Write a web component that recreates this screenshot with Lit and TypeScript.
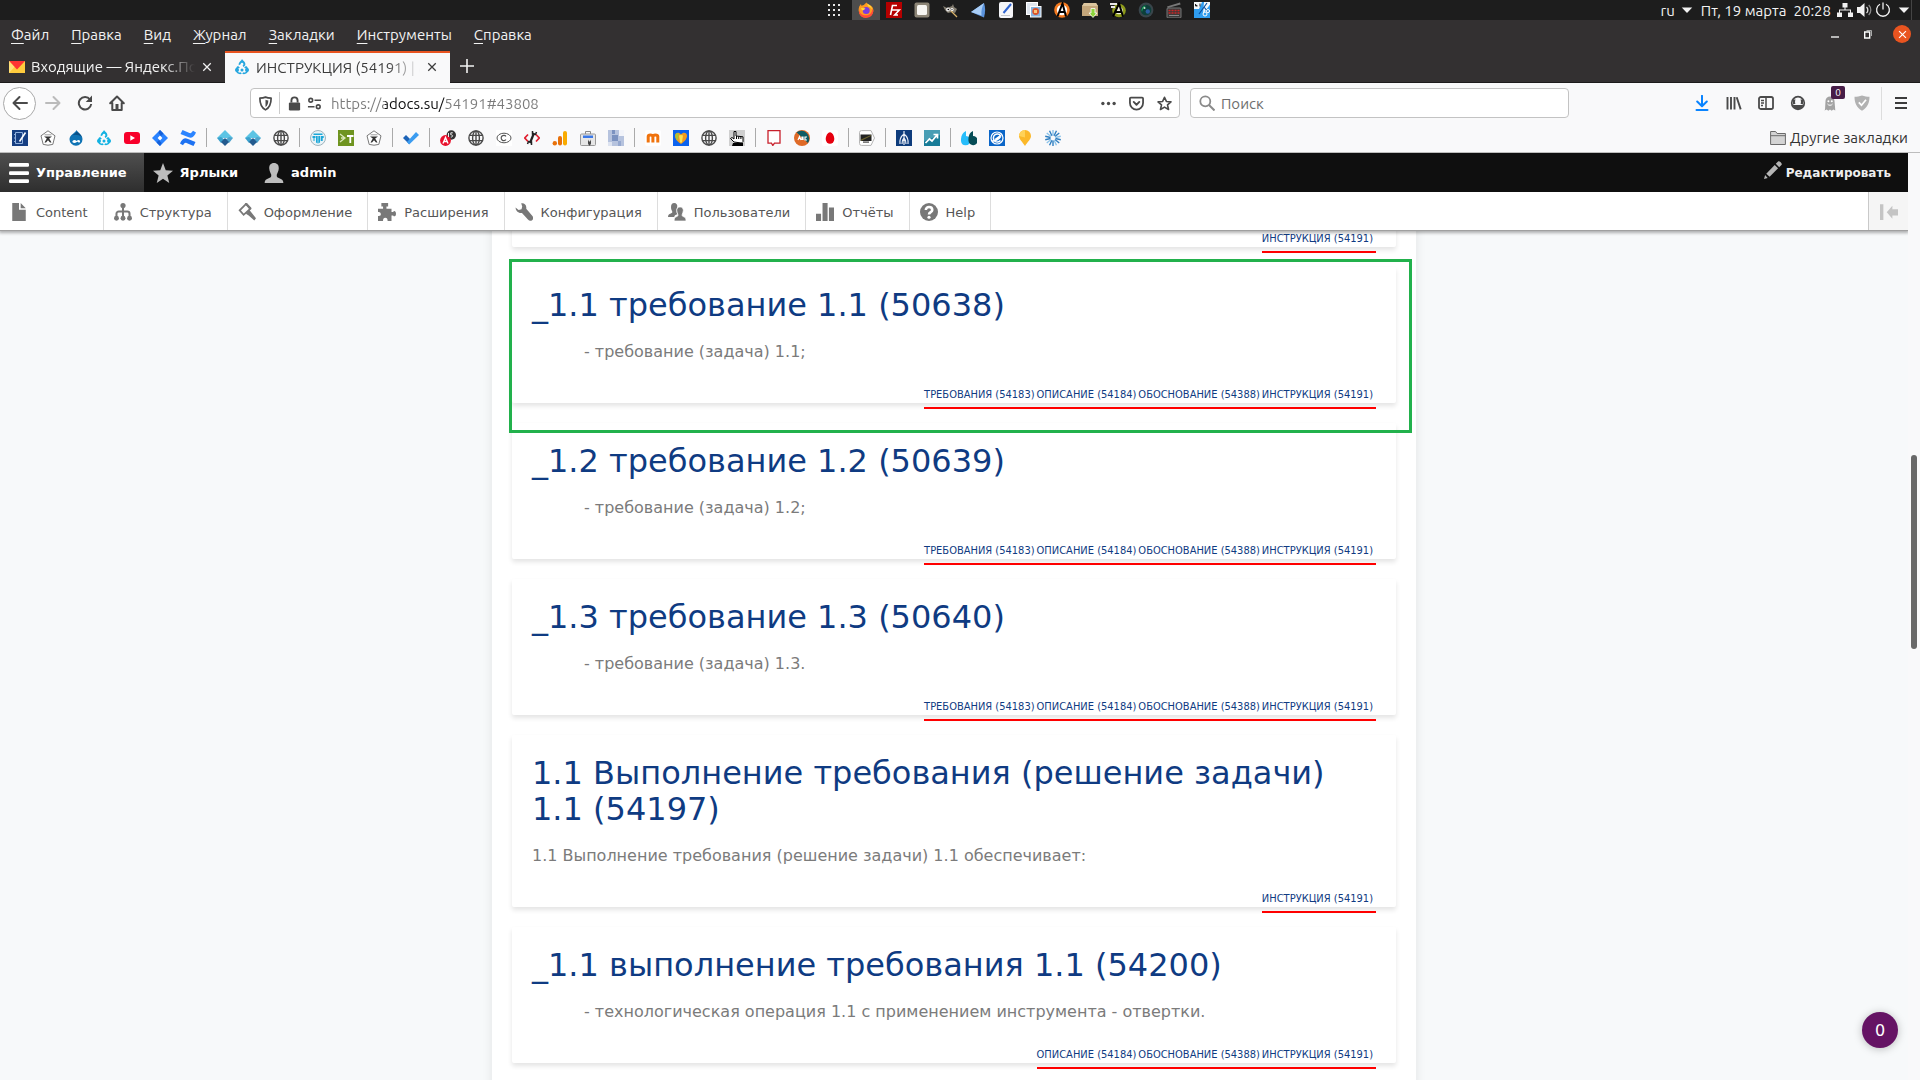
import { LitElement, html, svg, css, nothing } from "lit";
import { customElement, property } from "lit/decorators.js";

const globe = svg`<g fill="none" stroke="#4a4a4a" stroke-width="1.4"><circle cx="8" cy="8" r="7.1"/><ellipse cx="8" cy="8" rx="3.4" ry="7.1"/><path d="M1.6 5.4h12.8M1.6 10.6h12.8M8 1v14"/></g>`;
const diamond = svg`<path fill="#5cc4e4" d="M8 0l8 8H0z"/><path fill="#3aa0cc" d="M0 8l4-1 4 3-4 3z"/><path fill="#4ea3cc" d="M16 8l-4-1-4 3 4 3z"/><path fill="#235a8e" d="M8 8l4 4-4 4-4-4z"/>`;
const badge = svg`<path fill="#fff" stroke="#6a6a6a" stroke-width=".9" d="M8 .8l7 5-2.200 8.600a15 15 0 0 1-9.600 0L1 5.800z"/><path stroke="#888" stroke-width=".8" fill="none" d="M4.500 4.800l7 0"/><path d="M4 6.500h8L9.200 8.500l2.300 4H10L8 10.200 6 12.500H4.500L6.800 8.500z" fill="#333"/>`;
const drupal = (c: string) => svg`<g fill="${c}"><path d="M8 0c.9 1.800 3.400 2.500 3.400 5 0 1.400-.8 2.500-2 3.100L8.600 6.500a1.400 1.400 0 1 0-2-1.300L4.800 6.300C4 3 7.300 2.200 8 0z"/><path d="M4.300 6.800c.2 1 .9 1.800 1.900 2.200a2.300 2.300 0 1 0 .6 4.200l1 1.600A4.300 4.300 0 1 1 4.300 6.800z"/><path d="M11.700 6.800c-.2 1-.9 1.800-1.900 2.200a2.300 2.300 0 1 1-.6 4.200l-1 1.600a4.300 4.300 0 1 0 3.500-8z"/><circle cx="8" cy="11" r="1.500"/><circle cx="3" cy="11" r="2"/><circle cx="13" cy="11" r="2"/></g>`;
const down = svg`<path fill="#f2f2f2" d="M2 5h12l-6 6.500z"/>`;

const icons: Record<string, unknown> = {
  // desktop panel
  apps: svg`<g fill="#e6e6e6">${[2, 7, 12].map((y) => [2, 7, 12].map((x) => svg`<rect x="${x}" y="${y}" width="2" height="2"/>`))}</g>`,
  firefox: svg`<path fill="#ff9a1f" d="M8 15.600a7.400 7.400 0 0 1-7.400-7.400C.6 5.400 1.600 3.400 3 2l.4 1.700L5.800 3 8.500.4 10 2.500c3 .5 5.400 2.800 5.400 6.200A7.400 7.400 0 0 1 8 15.600z"/><path fill="#ff4b3a" d="M1 6.500C1 12 5 13.500 8 13.300c4 0 6.200-2.800 6.300-6.300.8 1 1 1.800 1 2.500A7.400 7.400 0 0 1 1 11z"/><circle cx="8.200" cy="8.400" r="3.500" fill="#7a3be0"/><path fill="#ffd93b" d="M9 1.500c3.500 1.500 5 3.500 5 6-1-2-2.500-2.700-4-3.200zM3 6l4.500.3L6 8l-2 .6z"/>`,
  fz: svg`<rect width="16" height="16" fill="#b50000"/><path fill="none" stroke="#fff" stroke-width="1.600" d="M4.500 13l2-9.500H11M5.500 8h4M9.300 8h4l-4.600 5H12"/>`,
  files: svg`<rect x=".5" y=".5" width="15" height="15" rx="2" fill="#8c8576"/><rect x="3" y="3" width="10" height="10" rx="1.500" fill="#f7f6f2"/>`,
  gimp: svg`<path fill="#857f72" d="M1 4l4 2 5-2 1-2 1 3 3 2-2 4-3-1-4 1-3-3z"/><circle cx="6" cy="7.500" r="1.900" fill="#eee"/><circle cx="10" cy="7.500" r="1.600" fill="#fff"/><path stroke="#d9b36a" stroke-width="1.300" d="M9 9l6 6"/><circle cx="6.300" cy="7.500" r=".8"/><circle cx="10" cy="7.500" r=".6"/>`,
  sail: svg`<path fill="#5b93dc" d="M1 10L14 1c1.500 4 1.500 9 0 14.500z"/><path fill="#a9cdf5" d="M1 10L14 1c-2 4-3 8-2.500 12.500z"/>`,
  note: svg`<rect x="1" width="14" height="16" rx="2" fill="#f4f5f8"/><path stroke="#2e63d0" stroke-width="2" d="M13 2L5.500 11"/><path stroke="#c3c6cc" d="M3 13.500h9"/>`,
  shots: svg`<rect x=".5" y=".5" width="11" height="12" fill="#dfe6ef" stroke="#fff"/><rect x="4" y="4" width="11.500" height="11.500" fill="#fff"/><rect x="5" y="5" width="9.500" height="9.500" fill="#86b4e0"/><circle cx="9.700" cy="9.500" r="3.400" fill="#d9542b"/><path fill="#f9c37a" d="M8 8h3v3H8z"/>`,
  aOrange: svg`<circle cx="8" cy="8" r="7.800" fill="#f47a1f"/><circle cx="8" cy="8" r="5.200" fill="#fff"/><path fill="none" stroke="#000" stroke-width="2" d="M3.500 14.500L8.500 1.500 12 14.500M5 10h6.500"/>`,
  box: svg`<path fill="#c5a77b" d="M0 4l2-3h12l2 3v10H0z"/><path fill="#dcc69f" d="M0 4l2-3h12l2 3z"/><path fill="#8ed43c" stroke="#fff" stroke-width=".8" d="M9 6.500h4V11h2l-4 4.500L7 11h2z"/>`,
  aGreen: svg`<circle cx="9" cy="8.500" r="6.800" fill="#8d9a1b"/><circle cx="9" cy="8.500" r="3.800" fill="#f4f4e4"/><path fill="#e8e8e8" d="M0 1h7v2H0zM1 4h4v2H1z"/><path fill="none" stroke="#000" stroke-width="2" d="M3 14.500L9 1.500 13 14.500M5 10h7"/>`,
  lens: svg`<circle cx="8" cy="8" r="7.400" fill="#39454b"/><circle cx="8" cy="8" r="5.300" fill="#0d3f3a"/><path fill="#1fa35b" d="M8 3.500A4.500 4.500 0 0 0 4 10c.5-3 2-5 4-6.500z"/><circle cx="9.800" cy="9.500" r="2.200" fill="#2a5ba0"/><circle cx="6.500" cy="6" r="1" fill="#c8e8d0"/>`,
  clap: svg`<path fill="#777" d="M1 4.500L14 .5l.6 2L1.800 6z"/><rect x="1" y="6" width="14" height="10" rx="1" fill="#3a3a3a" stroke="#777"/><path stroke="#d02525" stroke-dasharray="2 1" stroke-width="1.400" d="M2.500 8.500h11M2.500 11h11"/><path stroke="#888" d="M3 13.500h10"/>`,
  cut: svg`<rect width="16" height="16" fill="#2f9df0"/><path fill="#f4f8fb" d="M0 0h8L5 7H0zM10 0h6v2.500L9 12z"/><path stroke="#0a4ea0" stroke-width="1.200" fill="none" d="M13 1L5 12M10 5l4 5"/><circle cx="11" cy="12" r="2" fill="none" stroke="#fff"/><circle cx="14" cy="9" r="1.500" fill="none" stroke="#fff"/><path stroke="#222" d="M1.500 2v2h2M6 1.500v3"/>`,
  net: svg`<g fill="#f2f2f2"><rect x="5.500" y="1" width="5" height="4.500"/><rect x="0" y="10.500" width="5" height="4.500"/><rect x="11" y="10.500" width="5" height="4.500"/><path d="M7.500 5h1v2.500H14V11h-1V8.500H3V11H2V7.500h5.500z"/></g>`,
  vol: svg`<path fill="#f2f2f2" d="M1 5h3l4.500-4v14L4 11H1z"/><path fill="none" stroke="#ddd" stroke-width="1.300" d="M10.500 5a4 4 0 0 1 0 6"/><path fill="none" stroke="#8a8a8a" stroke-width="1.300" d="M12.700 3a7 7 0 0 1 0 10"/>`,
  power: svg`<path fill="none" stroke="#f2f2f2" stroke-width="1.300" d="M5 2.200a6.400 6.400 0 1 0 6 0M8 .5v7"/>`,
  down,
  // tabs and window
  mail: svg`<path fill="#ffcb3d" d="M0 2h16v12H0z"/><path fill="#ff3333" d="M0 2h16L8 10.500z"/><path fill="#ffe07a" d="M0 14V2l5.500 6z"/>`,
  drupalTab: drupal("#26a7df"),
  close: svg`<path stroke="currentColor" stroke-width="1.700" d="M3 3l10 10M13 3L3 13"/>`,
  plus: svg`<path stroke="currentColor" stroke-width="1.600" d="M8 1v14M1 8h14"/>`,
  min: svg`<path stroke="#fff" stroke-width="1.300" d="M4 11h8"/>`,
  restore: svg`<path fill="none" stroke="#fff" stroke-width="1.400" d="M4.700 6h5v6h-5z"/><path fill="none" stroke="#aaa" d="M6.500 4.500h5V10"/>`,
  // navigation
  back: svg`<path fill="none" stroke="currentColor" stroke-width="2" d="M15 8H2M7.500 2L1.500 8l6 6" stroke-linecap="round" stroke-linejoin="round"/>`,
  forward: svg`<path fill="none" stroke="#bbb" stroke-width="2" d="M1 8h13M8.500 2l6 6-6 6" stroke-linecap="round" stroke-linejoin="round"/>`,
  reload: svg`<path fill="none" stroke="currentColor" stroke-width="2" d="M13 4.500A6.200 6.200 0 1 0 14.200 9"/><path fill="currentColor" d="M15 .5V7H8.700z"/>`,
  home: svg`<path fill="none" stroke="currentColor" stroke-width="2" stroke-linejoin="round" stroke-linecap="round" d="M1.200 8.200L8 1.500l6.800 6.700M3.300 8v7h9.400V8"/><path fill="currentColor" d="M6.500 9h3v6h-3z"/>`,
  shield: svg`<path fill="none" stroke="currentColor" stroke-width="1.800" stroke-linejoin="round" d="M8 1.200c2 .9 4 1.100 6 1.100 0 6-1.500 10-6 12.500-4.500-2.500-6-6.500-6-12.500 2 0 4-.2 6-1.100z"/><path fill="currentColor" d="M8 4c1 .4 2 .6 3 .7-.1 3.500-1 5.600-3 7z"/>`,
  lock: svg`<path fill="none" stroke="currentColor" stroke-width="2" d="M4.700 7V4.800a3.300 3.300 0 0 1 6.600 0V7"/><rect x="2" y="6.800" width="12" height="8.700" rx="1.300" fill="currentColor"/>`,
  perm: svg`<g fill="none" stroke="currentColor" stroke-width="1.700"><circle cx="4" cy="4.500" r="2"/><circle cx="12" cy="11.500" r="2"/><path d="M8 4.500h7M1 11.500h7"/></g>`,
  dots: svg`<g fill="currentColor"><circle cx="2" cy="8" r="1.800"/><circle cx="8" cy="8" r="1.800"/><circle cx="14" cy="8" r="1.800"/></g>`,
  pocket: svg`<path fill="none" stroke="currentColor" stroke-width="1.900" stroke-linejoin="round" d="M2 1.700h12a1 1 0 0 1 1 1V7.500a7 7 0 0 1-14 0V2.700a1 1 0 0 1 1-1z"/><path fill="none" stroke="currentColor" stroke-width="2" stroke-linecap="round" stroke-linejoin="round" d="M5 6.300l3 3 3-3"/>`,
  star: svg`<path fill="none" stroke="currentColor" stroke-width="1.700" stroke-linejoin="round" d="M8 1.300l2 4.500 4.900.5-3.700 3.200 1.100 4.900L8 11.900l-4.300 2.500 1.100-4.900L1.100 6.300 6 5.800z"/>`,
  search: svg`<circle cx="6.300" cy="6.300" r="5" fill="none" stroke="#8a8a8a" stroke-width="1.800"/><path stroke="#8a8a8a" stroke-width="2" d="M10 10l5.500 5.500"/>`,
  download: svg`<path fill="none" stroke="#0a84ff" stroke-width="2" stroke-linecap="round" stroke-linejoin="round" d="M8 .8v10M3.200 6.500L8 11.300l4.800-4.800M2.500 15h11"/>`,
  library: svg`<path fill="none" stroke="currentColor" stroke-width="1.900" d="M1.500 2v12.500M5 2v12.500M8.500 2v12.500M10.700 2.200l4 12.200"/>`,
  sidebar: svg`<rect x="1" y="2" width="14" height="12" rx="1.800" fill="none" stroke="currentColor" stroke-width="1.800"/><path stroke="currentColor" stroke-width="1.500" d="M8 2v12M3 5.500h3M3 8h3M3 10.500h2"/>`,
  account: svg`<circle cx="8" cy="8" r="6.300" fill="none" stroke="currentColor" stroke-width="1.700"/><path fill="currentColor" d="M2.500 9c1 1 2.500 1.300 3 .9h5c.5.400 2 .1 3-.9-.5 3.500-3 5.300-5.500 5.300S3 12.500 2.500 9z"/><path fill="currentColor" d="M3 4.500h2.500V9H3zM10.500 4.500H13V9h-2.500z"/><circle cx="8" cy="6.800" r="2.900" fill="#f9f9fa"/>`,
  ghost: svg`<path fill="#a3a3a3" d="M3 14.500L3.500 6a4.500 4.500 0 0 1 9 0l.8 9.500-2-1-1.600 1.300L8 14.600l-1.700 1.200-1.600-1.300-2.200 1z"/><circle cx="6.400" cy="6.300" r="1" fill="#fff"/><circle cx="9.800" cy="6.300" r="1" fill="#fff"/><path fill="none" stroke="#fff" d="M5.500 9c1 1.700 4 1.700 5 0"/>`,
  guard: svg`<path fill="#b2b2b2" d="M8 .5c2.500 1 5 1.300 7.500 1.300 0 6-2 11-7.500 13.900C2.500 12.800.5 7.800.5 1.800 3 1.800 5.500 1.500 8 .5z"/><path fill="none" stroke="#fff" stroke-width="1.700" d="M4.800 7.300l2.700 2.900L12 4.700"/>`,
  burger: svg`<path stroke="#3c3c3c" stroke-width="2" d="M2 3h12M2 8h12M2 13h12"/>`,
  folder: svg`<path fill="#d4d4d4" stroke="#6a6a6a" d="M.6 14.500v-13h5l1.500 2h8.300v11z"/><path stroke="#6a6a6a" d="M.6 5.700h14.800"/>`,
  // bookmarks
  notebook: svg`<rect width="16" height="16" fill="#163f82"/><path fill="none" stroke="#8fb0dc" d="M3.500 2.500h7v11h-7zM2 4.500h2M2 8h2M2 11.500h2"/><path stroke="#fff" stroke-width="1.600" d="M13.500 2.500l-6 9"/>`,
  badge,
  drop: svg`<path fill="#0f73b4" d="M8.500 0c1 2.500 6 4.500 6 9.200a6.500 6.500 0 0 1-13 0C1.500 5 7 3.500 8.500 0z"/><path fill="#0a4f86" d="M2 7c2-3 8-3 12 0-1-2.500-3.500-4-5-5.500C7 4 3.500 5 2 7z"/><path fill="#fff" d="M4.500 11c1.500-1.800 3-1 4 0 1.500-1.300 3-1.500 3.500 0s-1 2-2 1-2 1-3.500 1-2.500-.8-2-2z"/>`,
  drupal: drupal("#12b2e2"),
  youtube: svg`<rect y="2" width="16" height="12" rx="3" fill="#f8002a"/><path fill="#fff" d="M6.300 5.300L11 8l-4.700 2.700z"/>`,
  jira: svg`<path fill="#2a83ff" d="M8 0l8 8-8 8-8-8z"/><path fill="#1560d8" d="M8 0l3.500 3.500L8 7V4.500C6 3.500 6 2 8 0zM8 16l-3.500-3.500L8 9v2.500c2 1 2 2.500 0 4.500z"/><path fill="#fff" d="M8 5.600L10.400 8 8 10.400 5.600 8z"/>`,
  confluence: svg`<path fill="#1d72f2" d="M1 11.500C3.500 8 5 7.500 8 9l7.500 3-2 4L6.500 13c-1.500-.5-2 .3-3.500 2.200L0 13.500z"/><path fill="#2b84ff" d="M15 4.500C12.500 8 11 8.500 8 7L.5 4l2-4L9.500 3c1.500.5 2-.3 3.500-2.200L16 2.500z"/>`,
  diamond,
  globe,
  trello: svg`<circle cx="8" cy="8" r="7.500" fill="#e9f3f7" stroke="#9fb4bd"/><path fill="#1ba7d8" d="M3.500 3.500h9V5h-9zM2.500 6h3v2h-1v3h-1V8h-1zM6 6h1.700v7.500L6 12.500zM8.300 6H10v6.500l-1.700 1zM10.700 6h3v2h-1v3h-2z"/>`,
  typo: svg`<rect width="16" height="16" fill="#6f9420"/><path fill="none" stroke="#d9e6b8" stroke-width="1.300" d="M2 4l5 4-5 4M3 8h3"/><path fill="none" stroke="#fff" stroke-width="1.800" d="M9 6h6.500M12.300 6v7"/>`,
  check: svg`<path fill="#1c63b7" d="M0 8l3-3 4 4-1 5z"/><path fill="#3b9cf0" d="M4 12L13 2l3 3L6.200 14.500z"/>`,
  a5: svg`<circle cx="11.300" cy="5" r="4.700" fill="#333"/><circle cx="5.500" cy="10.500" r="5.400" fill="#e8112d"/><path fill="none" stroke="#fff" stroke-width="1.400" d="M3 13.500l2.500-6 2.500 6M4 11.500h3"/><path fill="none" stroke="#eee" d="M12.800 2.800h-2v2c2.500 0 2.500 2.200 0 2.300M8.500 3v4"/>`,
  eye: svg`<rect width="16" height="16" fill="#fff"/><ellipse cx="8" cy="8" rx="7" ry="4.800" fill="none" stroke="#555"/><path fill="none" stroke="#555" stroke-width="1.200" d="M10 6.300a2.700 2.700 0 1 0 0 3.400"/>`,
  tools: svg`<path fill="none" stroke="#e02030" stroke-width="1.700" d="M4 4.500L.8 8 4 11.500M12 4.500L15.200 8 12 11.500"/><path stroke="#222" stroke-width="2.200" d="M10 3L6 13"/><path fill="none" stroke="#222" stroke-width="1.500" d="M8.500 1v3l3 .5 1-2.500M7.500 15v-3l-3-.5-1 2.500"/>`,
  analytics: svg`<rect x="11" y="1" width="4" height="14.500" rx="2" fill="#f9ab00"/><rect x="6" y="6" width="4" height="9.500" rx="2" fill="#e8710a"/><circle cx="2.800" cy="13.300" r="2.200" fill="#e8710a"/>`,
  store: svg`<path fill="none" stroke="#888" d="M5.500 4V1.500h5V4"/><rect x=".5" y="4" width="15" height="11.500" rx="1" fill="#e6e6e6" stroke="#999"/><path fill="#3b78e7" d="M3 5.500h10V8H3z"/><path fill="#444" d="M8 9.500l1 2h1l1-2v4l-1 2H9l-1-2z"/>`,
  pixels: svg`<rect width="16" height="16" fill="#b6c3de"/><path fill="#7b92c0" d="M4 0h3v4H4zM4 5h6v6H4z"/><path fill="#f2f4fa" d="M11 0h5v6h-5z"/><path fill="#dde3f0" d="M0 12h4v4H0z"/><path fill="#95a8cf" d="M10 11h3v5h-3z"/>`,
  moodle: svg`<rect width="16" height="16" rx="2" fill="#fff"/><path fill="none" stroke="#f0730d" stroke-width="3" d="M3.200 12.500V6.500c0-2 4.300-2 4.700 0v6V6.500c.3-2 4.700-2 4.900 0v6"/>`,
  heart: svg`<rect width="16" height="16" fill="#0b62ee"/><path fill="#f29a1d" d="M8 14C3 10.500 2 8 2 5.500 2 2.500 6 1.500 8 4.500c2-3 6-2 6 1C14 8 13 10.500 8 14z"/><path fill="#a8c43b" d="M2.300 6c0-3 2.700-4 3.500-2L5 10.500C3.500 9 2.300 8 2.300 6z"/><path fill="#ffe14f" d="M6 5.500L8 5l2 .5L9 12l-1 1-1-1z"/>`,
  hand: svg`<rect width="16" height="16" fill="#cfcfcf"/><path fill="#fff" stroke="#000" d="M5 12L1.500 8.500 3 7.500l2 1.500V1.500h2V6l7 .8v4.700l-1.500 1.500z"/><path stroke="#000" d="M7.500 6v3M9.700 6.500V9M11.900 6.500V9"/><path d="M4 13h10v3H3z"/>`,
  bubble: svg`<path fill="#fff" stroke="#c8202c" stroke-width="1.300" d="M2 .7h12v12.500H8.500L6.800 15.500 5.500 13.200H2z"/>`,
  disc: svg`<circle cx="8" cy="8" r="8" fill="#df6a27"/><path fill="#0e5b63" d="M2.500 2.300A8 8 0 0 1 14 13z"/><path fill="none" stroke="#fff" stroke-width="1.200" d="M4 10l1.500-3.500L7 10M8 10V6.500M9 6.500V10M13 7h-2v3h2"/>`,
  egg: svg`<rect width="16" height="16" rx="2" fill="#fff"/><path fill="#e6000f" d="M8 2.200c2.500 0 4.300 4 4.300 6.800a4.300 4.800 0 0 1-8.600 0C3.700 6.200 5.500 2.200 8 2.200z"/>`,
  screen: svg`<path fill="#fff" stroke="#b5b5b5" d="M2.500.6h9.500L15.500 8 12 15.400H2.500a2 2 0 0 1-2-2V2.600a2 2 0 0 1 2-2z"/><rect x="1.500" y="4.500" width="11" height="6.500" fill="#222"/><path fill="#d8c23c" d="M2 9.500L12 5v1L2 11z" opacity=".4"/><path fill="#444" d="M4 11.500h6v1.200H4z"/>`,
  emblem: svg`<rect width="16" height="16" fill="#0e3c7c"/><path fill="none" stroke="#e8edf6" stroke-width="1.200" d="M8 1v14M8 4C4 7 3.500 10 4 14M8 4c4 3 4.500 6 4 10M8 8c-1.500 1.500-2 3.500-2 6M8 8c1.500 1.500 2 3.500 2 6"/>`,
  chart: svg`<rect width="16" height="16" fill="#177b97"/><path fill="#69b4c8" d="M0 0h16v5L0 11z" opacity=".6"/><path fill="none" stroke="#fff" stroke-width="1.700" d="M1.500 13l4-4 2.500 2L13 5M9.500 4.500h4v4"/>`,
  commas: svg`<path fill="#27bdfb" d="M5 1v5a4.600 4.600 0 1 1-5 5C-.3 6 1.500 2.500 5 1z"/><path fill="#064c56" d="M12 1v5a4.600 4.600 0 1 1-4.500 5C7 6 8.500 2.500 12 1z"/>`,
  swirl: svg`<rect width="16" height="16" fill="#0b66c8"/><circle cx="8" cy="8" r="6" fill="none" stroke="#fff" stroke-width="1.200"/><path fill="none" stroke="#fff" stroke-width="1.500" d="M3 11c4 0 7-2 9-5M11.500 10.500a4 4 0 1 1 0-5L6 9.500"/>`,
  pin: svg`<path fill="#fbb829" d="M8 0a6 6 0 0 1 6 6c0 3-3.500 6-6 10C5.500 12 2 9 2 6a6 6 0 0 1 6-6z"/><path fill="#ffd257" d="M8 0a6 6 0 0 0-6 6l6 1.500z"/>`,
  burst: svg`<g stroke-width="1.400">${Array.from({ length: 14 }, (_, i) => svg`<path stroke="${i % 3 ? "#2f7fc1" : "#8cc4ea"}" d="M8 0V5.500" transform="rotate(${(i * 360) / 14} 8 8)"/>`)}</g>`,
  // site toolbar
  menu: svg`<g fill="#fff"><rect y="0" width="16" height="3" rx="1"/><rect y="6.500" width="16" height="3" rx="1"/><rect y="13" width="16" height="3" rx="1"/></g>`,
  favorite: svg`<path fill="#bdbdbd" d="M8 0l2.200 5.700 5.800.5-4.500 3.700L13 16l-5-3.400L3 16l1.500-6.100L0 6.200l5.800-.5z"/>`,
  person: svg`<path fill="#bdbdbd" d="M8 0c2.600 0 4 1.800 3.800 4.500-.2 2.300-1.300 3.800-1.600 4.800-.2 2 .5 2.200 2.500 3 1.800.7 2.700 1.200 2.800 3.700H.5c.1-2.500 1-3 2.800-3.700 2-.8 2.700-1 2.500-3-.3-1-1.400-2.500-1.600-4.800C4 1.800 5.400 0 8 0z"/>`,
  pencil: svg`<path fill="#b5b5b5" d="M0 16l1-3.500L3.300 15zM2 11.300l7.500-7.800 3 3L5 14zM10.500 2.500L12.700.3c1-.7 3.800 2 3 3L13.500 5.500z"/>`,
  page: svg`<path fill="#787878" d="M2 0h6v6h6v10H2zM9.500 0L14 4.700H9.500z"/>`,
  tree: svg`<g fill="#787878"><circle cx="8" cy="2.300" r="2.300"/><circle cx="2.200" cy="13.500" r="2.200"/><circle cx="8" cy="13.500" r="2.200"/><circle cx="13.800" cy="13.500" r="2.200"/></g><path fill="none" stroke="#787878" stroke-width="1.800" d="M8 3v10M2.200 13V9.500a2 2 0 0 1 2-2h7.600a2 2 0 0 1 2 2V13"/>`,
  brush: svg`<path fill="none" stroke="#787878" stroke-width="1.600" d="M7 1L1.500 6.500 5 10.500 11 5z"/><path fill="#787878" d="M6 .3L8 0l4 4.500-1.500 1.700zM10 6l6 7.500-1.500 2L9.500 11 7 9.500z"/>`,
  puzzle: svg`<path fill="#787878" d="M0 5h4.500V3H3V0h6v3H7.500v2H12v3h1.500c.5-1.500 2.500-1 2.500 1.500s-2 3-2.500 1.500H12v5H8.500c.3-1.500-.5-3-2-3s-2.300 1.500-2 3H0v-4.500c2 .3 2.500-.5 2.500-1.500S2 7.700 0 8z"/>`,
  wrench: svg`<path fill="#787878" d="M5.500.3c2.700-.6 5 1.500 4.500 4.700l5.500 6.500c1 1.500.7 3-.3 3.800-1.200.9-2.700.6-3.700-.6L6.200 8.800C3.300 9.400.5 7 .5 4l2.700 2.300 2.600-.8.6-2.400z"/>`,
  people: svg`<path fill="#787878" d="M5.500 0c2 0 3 1.500 2.700 3.500L7.500 6c0 2 .3 3 .8 4-1.800.6-2.500 1.200-2.800 2.500H0c0-2 .7-2.500 2.500-3.200 1.200-.4 1.500-1 1.200-2C3 6 2.600 5 2.700 3.300 2.700 1.200 3.700 0 5.500 0z"/><path fill="#787878" stroke="#fff" stroke-width=".6" d="M10.700 3.500c2 0 3 1.400 2.900 3.200-.1 1.500-.7 2.500-1 3.500-.2 1.500.3 1.600 1.500 2.100 1.300.5 1.900 1.200 1.900 3.700H5.500c0-2.500.5-3.200 1.800-3.700 1.200-.5 1.700-.6 1.500-2.100-.3-1-.9-2-1-3.500C7.700 4.900 8.700 3.500 10.700 3.500z"/>`,
  bars: svg`<path fill="#787878" d="M0 9.500h4.500V16H0zM5.800 0h4.500v16H5.800zM11.500 4H16v12h-4.500z"/>`,
  help: svg`<circle cx="8" cy="8" r="8" fill="#787878"/><path fill="none" stroke="#fff" stroke-width="2.300" d="M5.200 6.200c0-3.600 5.700-3.300 5.700 0C10.900 8.200 8 8 8 10.200"/><circle cx="8" cy="12.700" r="1.400" fill="#fff"/>`,
  collapse: svg`<path fill="#c4c4c4" d="M0 1h3v14H0zM16 5.500V11h-5v3L6 8.200 11 2.500v3z"/>`,
};

const icon = (name: string, cls = "") =>
  html`<svg class="icon ${cls}" viewBox="0 0 16 16" aria-hidden="true">${icons[name]}</svg>`;

interface Requirement {
  title: string;
  text: string;
  nested?: boolean;
  marked?: boolean;
  links: string[];
}

const REQ = "Требования (54183)";
const DESC = "Описание (54184)";
const WHY = "Обоснование (54388)";
const HOW = "Инструкция (54191)";

const requirements: Requirement[] = [
  { title: "_1.1 требование 1.1 (50638)", text: "- требование (задача) 1.1;", nested: true, marked: true, links: [REQ, DESC, WHY, HOW] },
  { title: "_1.2 требование 1.2 (50639)", text: "- требование (задача) 1.2;", nested: true, links: [REQ, DESC, WHY, HOW] },
  { title: "_1.3 требование 1.3 (50640)", text: "- требование (задача) 1.3.", nested: true, links: [REQ, DESC, WHY, HOW] },
  { title: "1.1 Выполнение требования (решение задачи) 1.1 (54197)", text: "1.1 Выполнение требования (решение задачи) 1.1 обеспечивает:", links: [HOW] },
  { title: "_1.1 выполнение требования 1.1 (54200)", text: "- технологическая операция 1.1 с применением инструмента - отвертки.", nested: true, links: [DESC, WHY, HOW] },
];

const base = css`
  * { box-sizing: border-box; }
  button { font: inherit; color: inherit; background: none; border: 0; padding: 0; margin: 0; display: flex; align-items: center; justify-content: center; }
  a { color: inherit; text-decoration: none; }
  .icon { width: 16px; height: 16px; display: block; flex: none; }
`;

@customElement("requirement-card")
export class RequirementCard extends LitElement {
  @property({ attribute: false }) item?: Requirement;
  @property({ attribute: false }) links: string[] = [];

  static styles = [base, css`
    :host { display: block; }
    .card { position: relative; display: flex; flex-direction: column; padding: 20px 20px 0; background: #fff; border-radius: 2px; box-shadow: 0 3px 5px rgba(0, 0, 0, 0.11); }
    .title { margin: 0 0 17px; font-size: 32px; line-height: 36px; font-weight: 400; color: #0f3b82; }
    .text { margin: 0; font-size: 16px; line-height: 24px; color: #7b7b7b; }
    .nested { padding-left: 52px; }
    .links { display: flex; align-self: flex-end; gap: 2px; margin: 21px 0 -6px; padding: 0 3px 2px 0; border-bottom: 2px solid #f00; font-family: "DejaVu Sans Condensed", "DejaVu Sans", sans-serif; font-size: 11px; line-height: 20px; text-transform: uppercase; color: #0f3b82; }
    .mark { position: absolute; z-index: 1; inset: -8px -16px -30px -3px; border: 3px solid #22b14c; pointer-events: none; }
  `];

  render() {
    const { item } = this;
    return html`<article class="card">
      ${item
        ? html`<h2 class="title"><a href="#node">${item.title}</a></h2>
            <p class="text ${item.nested ? "nested" : ""}">${item.text}</p>`
        : nothing}
      <nav class="links">${(item?.links ?? this.links).map((l) => html`<a href="#doc">${l}</a>`)}</nav>
      ${item?.marked ? html`<div class="mark"></div>` : nothing}
    </article>`;
  }
}

@customElement("app-root")
export class AppRoot extends LitElement {
  static styles = [base, css`
    :host { display: flex; flex-direction: column; height: 100vh; overflow: hidden; font-family: "DejaVu Sans", sans-serif; background: #f7f9fa; }
    .panel, .menus, .tabs, .nav, .bookmarks { font-family: Ubuntu, "Noto Sans", sans-serif; font-size: 15px; }
    .panel { display: flex; align-items: center; height: 20px; padding-left: calc(43% - 6px); background: #1d1d1d; color: #f2f2f2; flex: none; }
    .launcher { display: flex; align-items: center; justify-content: center; width: 28px; height: 20px; }
    .launcher:first-child { margin-right: 4px; }
    .launcher-on { background: #4d4d4d; }
    .status { margin-left: auto; display: flex; align-items: center; gap: 3px; height: 20px; margin-right: 8px; border-right: 1px solid #444; }
    .lang { margin-right: 2px; }
    .clock { display: flex; gap: 7px; margin: 0 3px 0 4px; }
    .arrow { margin: 0 0 0 3px; }
    .small { width: 14px; height: 14px; }

    .menus { display: flex; align-items: center; height: 31px; padding: 0 9px 3px 11px; background: #333031; color: #f2f2f2; flex: none; }
    .menu-list { display: flex; gap: 22px; flex: 1; }
    .key { text-decoration: underline; text-underline-offset: 3px; }
    .window { display: flex; align-items: center; gap: 17px; }
    .shut { width: 18px; height: 18px; border-radius: 50%; background: #e95420; color: #fff; }
    .shut .icon { width: 11px; height: 11px; }

    .tabs { display: flex; height: 32px; background: #333031; color: #f2f2f2; flex: none; border-bottom: 1px solid #1c1b1b; }
    .tab { display: flex; align-items: center; width: 225px; height: 31px; padding: 0 12px 2px 9px; gap: 6px; border-top: 2px solid transparent; }
    .tab-on { height: 32px; background: #f9f9fa; color: #3c3c3c; border-top-color: #e95420; }
    .tab-title { flex: 1; min-width: 0; white-space: nowrap; -webkit-mask-image: linear-gradient(to left, transparent, #000 32px); mask-image: linear-gradient(to left, transparent, #000 32px); }
    .tab .small { width: 12px; height: 12px; }
    .add { width: 34px; height: 29px; }

    .nav { display: flex; align-items: center; height: 40px; padding: 0 11px 0 3px; background: #f9f9fa; color: #4a4a4a; flex: none; }
    .round { width: 33px; height: 33px; border-radius: 50%; border: 1px solid #a9a9a9; background: #fff; margin-right: 9px; }
    .steps { display: flex; gap: 16px; }
    .box { display: flex; align-items: center; height: 30px; background: #fff; border: 1px solid #c3c3c3; border-radius: 4px; }
    .url { flex: 1 1 929px; margin-left: 125px; padding: 0 7px; }
    .url .icon { width: 15px; height: 15px; }
    .url-divider { width: 1px; height: 22px; background: #ccc; margin: 0 7px 0 6px; }
    .perm-wrap { margin: 0 9px 0 5px; }
    .field { flex: 1; min-width: 0; height: 28px; border: 0; outline: 0; padding: 0; background: none; font: inherit; color: #6e6e6e; }
    .address { color: transparent; background: linear-gradient(to right, #7a7a7a 54px, #0c0c0d 54px, #0c0c0d 114px, #7a7a7a 114px); -webkit-background-clip: text; background-clip: text; }
    .field::placeholder { color: #6e6e6e; opacity: 1; }
    .url-tools { display: flex; gap: 13px; }
    .find { flex: 1 1 378px; margin-left: 10px; padding: 0 8px; gap: 6px; }
    .tools { display: flex; align-items: center; gap: 16px; margin-left: 125px; flex: none; }
    .ghost { position: relative; }
    .count { position: absolute; left: 9px; top: -9px; min-width: 14px; height: 13px; background: #471d47; color: #fff; border-radius: 2px; font-size: 10px; line-height: 13px; text-align: center; }
    .tools-divider { width: 1px; height: 33px; background: #ddd; margin: 0 -5px; }

    .bookmarks { display: flex; align-items: center; height: 30px; padding: 0 12px; background: #f9f9fa; color: #333; border-bottom: 1px solid #bdbdbd; flex: none; }
    .group { display: flex; align-items: center; gap: 12px; height: 19px; }
    .group + .group { margin-left: 10px; padding-left: 10px; border-left: 1px solid #aaa; }
    .other { margin-left: auto; display: flex; align-items: center; gap: 4px; }

    .page { flex: 1; min-height: 0; display: flex; }
    .site { flex: 1; min-width: 0; display: flex; flex-direction: column; position: relative; }
    .admin { display: flex; height: 39px; background: #0f0f0f; color: #fff; font-size: 13px; font-weight: 700; flex: none; }
    .admin-item { display: flex; align-items: center; gap: 7px; padding: 0 17px 0 9px; }
    .admin-item .icon { width: 20px; height: 20px; }
    .admin-on { background: linear-gradient(#4f4f4f, #2e2e2e); }
    .edit { margin-left: auto; gap: 4px; font-size: 12px; padding-right: 17px; color: #eee; }
    .edit .icon { width: 18px; height: 18px; margin-bottom: 6px; }
    .tray { position: relative; z-index: 2; display: flex; height: 39px; background: #fff; color: #565656; font-size: 13px; border-bottom: 1px solid #a0a0a0; box-shadow: 0 1px 3px 1px rgba(0, 0, 0, 0.3); clip-path: inset(0 0 -6px 0); flex: none; }
    .tray-item { display: flex; align-items: center; gap: 8px; padding: 2px 15px 0 10px; border-right: 1px solid #ddd; }
    .tray .icon { width: 18px; height: 18px; }
    .orient { margin-left: auto; width: 40px; padding-top: 2px; background: #f5f5f5; border-left: 1px solid #c9c9c9; }
    .view { flex: 1; min-height: 0; overflow: hidden; }
    .column { width: min(924px, 100%); min-height: 110%; margin: -43px auto 0; padding: 0 20px 20px; display: flex; flex-direction: column; gap: 20px; background: #fff; box-shadow: 0 0 10px rgba(0, 0, 0, 0.09); }
    .fab { position: absolute; right: 10px; bottom: 32px; width: 36px; height: 36px; border-radius: 50%; background: #651364; color: #fff; font-size: 16px; box-shadow: 0 1px 8px rgba(0, 0, 0, 0.25); }
    .scroll { width: 12px; background: #f9f9fa; padding-top: 302px; flex: none; }
    .thumb { width: 6px; height: 31%; margin: 0 auto; border-radius: 3px; background: #686868; }
  `];

  render() {
    const launchers = ["apps", "firefox", "fz", "files", "gimp", "sail", "note", "shots", "aOrange", "box", "aGreen", "lens", "clap", "cut"];
    const menus = ["Файл", "Правка", "Вид", "Журнал", "Закладки", "Инструменты", "Справка"];
    const groups = [
      ["notebook", "badge", "drop", "drupal", "youtube", "jira", "confluence"],
      ["diamond", "diamond", "globe"],
      ["trello", "typo", "badge"],
      ["check"],
      ["a5", "globe", "eye", "tools", "analytics", "store", "pixels"],
      ["moodle", "heart", "globe", "hand"],
      ["bubble", "disc", "egg"],
      ["screen"],
      ["emblem", "chart"],
      ["commas", "swirl", "pin", "burst"],
    ];
    const tray = [
      ["page", "Content"], ["tree", "Структура"], ["brush", "Оформление"], ["puzzle", "Расширения"],
      ["wrench", "Конфигурация"], ["people", "Пользователи"], ["bars", "Отчёты"], ["help", "Help"],
    ];
    return html`
      <div class="panel">
        ${launchers.map((n) => html`<button class="launcher ${n === "firefox" ? "launcher-on" : ""}">${icon(n)}</button>`)}
        <div class="status">
          <span class="lang">ru</span>${icon("down", "small")}
          <span class="clock"><span>Пт, 19 марта</span><span>20:28</span></span>
          ${icon("net")}${icon("vol")}${icon("power")}${icon("down", "small arrow")}
        </div>
      </div>
      <div class="menus">
        <div class="menu-list">${menus.map((m) => html`<button><span><span class="key">${m[0]}</span>${m.slice(1)}</span></button>`)}</div>
        <div class="window"><button>${icon("min")}</button><button>${icon("restore")}</button><button class="shut">${icon("close")}</button></div>
      </div>
      <div class="tabs">
        <div class="tab">${icon("mail")}<span class="tab-title">Входящие — Яндекс.По</span><button>${icon("close", "small")}</button></div>
        <div class="tab tab-on">${icon("drupalTab")}<span class="tab-title">ИНСТРУКЦИЯ (54191) | a</span><button>${icon("close", "small")}</button></div>
        <button class="add">${icon("plus")}</button>
      </div>
      <div class="nav">
        <button class="round">${icon("back")}</button>
        <div class="steps"><button>${icon("forward")}</button><button>${icon("reload")}</button><button>${icon("home")}</button></div>
        <div class="box url">
          ${icon("shield")}<span class="url-divider"></span>${icon("lock")}<span class="perm-wrap">${icon("perm")}</span>
          <input class="field address" aria-label="Адрес" .value=${"https://adocs.su/54191#43808"} />
          <div class="url-tools"><button>${icon("dots")}</button><button>${icon("pocket")}</button><button>${icon("star")}</button></div>
        </div>
        <div class="box find">${icon("search")}<input class="field" aria-label="Поиск" placeholder="Поиск" /></div>
        <div class="tools">
          ${["download", "library", "sidebar", "account"].map((n) => html`<button>${icon(n)}</button>`)}
          <button class="ghost">${icon("ghost")}<span class="count">0</span></button>
          <button>${icon("guard")}</button><span class="tools-divider"></span><button>${icon("burger")}</button>
        </div>
      </div>
      <div class="bookmarks">
        ${groups.map((g) => html`<div class="group">${g.map((n) => html`<a href="#bookmark">${icon(n)}</a>`)}</div>`)}
        <button class="other">${icon("folder")}Другие закладки</button>
      </div>
      <div class="page">
        <div class="site">
          <nav class="admin">
            <a class="admin-item admin-on" href="#manage">${icon("menu")}Управление</a>
            <a class="admin-item" href="#shortcuts">${icon("favorite")}Ярлыки</a>
            <a class="admin-item" href="#user">${icon("person")}admin</a>
            <button class="admin-item edit">${icon("pencil")}Редактировать</button>
          </nav>
          <nav class="tray">
            ${tray.map(([n, label]) => html`<a class="tray-item" href="#tray">${icon(n)}${label}</a>`)}
            <button class="orient">${icon("collapse")}</button>
          </nav>
          <main class="view">
            <div class="column">
              <requirement-card .links=${[HOW]}></requirement-card>
              ${requirements.map((r) => html`<requirement-card .item=${r}></requirement-card>`)}
            </div>
          </main>
          <button class="fab">0</button>
        </div>
        <div class="scroll"><div class="thumb"></div></div>
      </div>`;
  }
}
